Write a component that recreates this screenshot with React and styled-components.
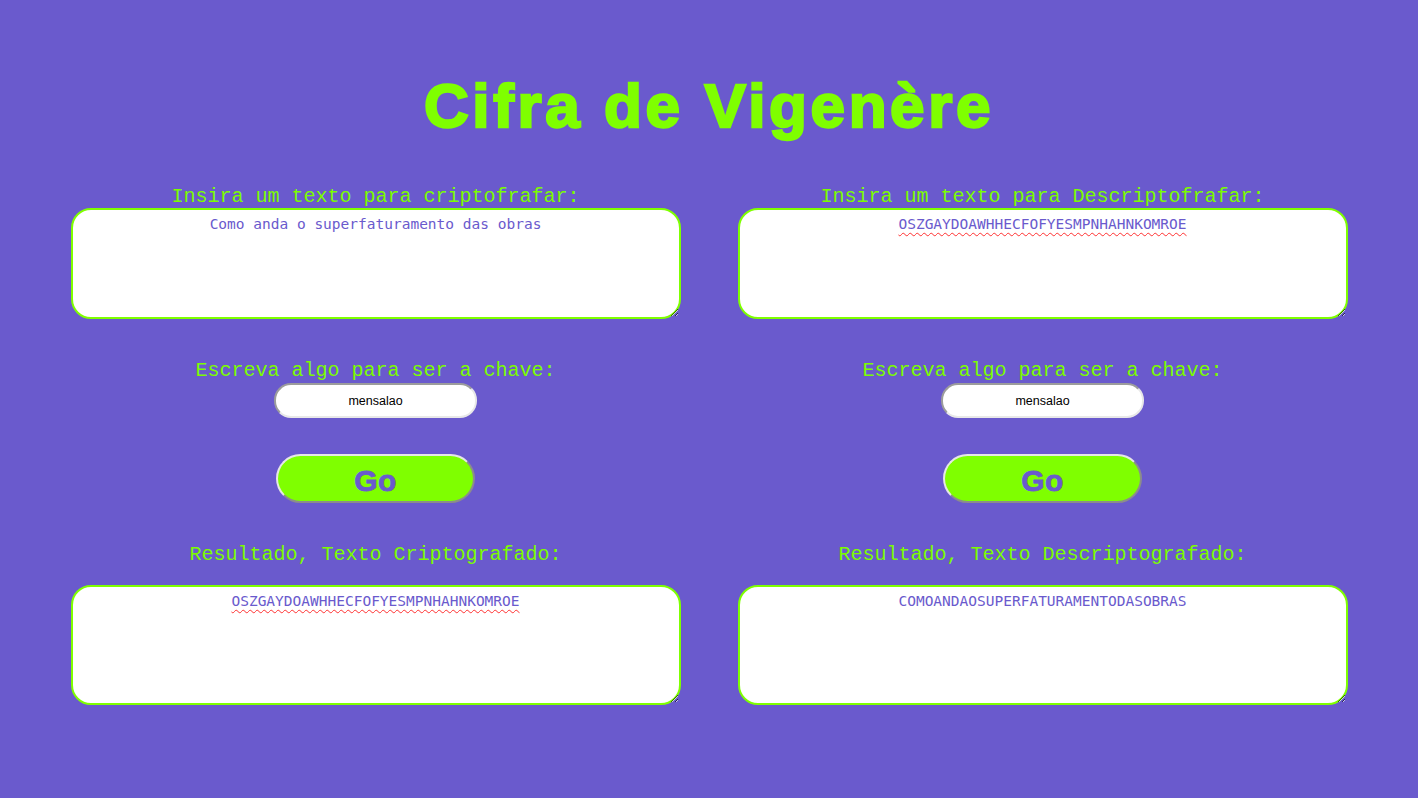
import React from "react";
import styled, { createGlobalStyle } from "styled-components";

const Global = createGlobalStyle`
  html, body {
    margin: 0;
    padding: 0;
    background: #6a5acd;
  }
  body {
    font-family: "Liberation Sans", Arial, sans-serif;
    min-height: 798px;
  }
`;

const Page = styled.main`
  display: flex;
  flex-direction: column;
  align-items: center;
  padding-top: 70px;
`;

const Title = styled.h1`
  margin: 0;
  font-family: "Liberation Sans", Arial, sans-serif;
  font-weight: 900;
  font-size: 62px;
  line-height: 72px;
  letter-spacing: 3.6px;
  color: #7fff00;
  -webkit-text-stroke: 2.4px #7fff00;
`;

const Columns = styled.div`
  display: grid;
  grid-template-columns: 610px 610px;
  column-gap: 57px;
  margin-top: 44px;
`;

const Column = styled.section`
  display: flex;
  flex-direction: column;
  align-items: center;
`;

const Label = styled.label`
  display: block;
  font-family: "Liberation Mono", "Courier New", monospace;
  font-size: 20px;
  line-height: 22px;
  color: #7cfc00;
  margin-top: ${(p) => p.$top || 0}px;
  margin-bottom: ${(p) => p.$bottom || 0}px;
  white-space: pre;
`;

const TextBox = styled.textarea`
  box-sizing: border-box;
  width: 610px;
  height: ${(p) => p.$height}px;
  margin: 0;
  padding: 6px 8px;
  border: 2px solid #7fff00;
  border-radius: 20px;
  background: #fff;
  color: #6a5acd;
  font-family: "DejaVu Sans Mono", monospace;
  font-size: 14.5px;
  text-align: center;
  outline: none;
  text-decoration: ${(p) => (p.$squiggle ? "underline wavy #ff3030" : "none")};
  text-decoration-thickness: 1px;
  text-underline-offset: 3px;
`;

const KeyInput = styled.input`
  box-sizing: border-box;
  width: 203px;
  height: 35px;
  margin: 1px 0 0;
  padding: 0 10px;
  border: 2px solid;
  border-color: #9c9c9c #e8e8e8 #e8e8e8 #9c9c9c;
  border-radius: 17px;
  background: #fff;
  color: #000;
  font-family: "Liberation Sans", Arial, sans-serif;
  font-size: 12.5px;
  text-align: center;
  outline: none;
`;

const GoButton = styled.button`
  box-sizing: border-box;
  width: 199px;
  height: 49px;
  margin-top: 36px;
  border: 2px solid;
  border-color: #e6e6e6 #8c8c8c #8c8c8c #e6e6e6;
  border-radius: 25px;
  background: #7fff00;
  color: #6a5acd;
  font-family: "Liberation Sans", Arial, sans-serif;
  font-weight: 700;
  font-size: 30px;
  letter-spacing: 0.5px;
  -webkit-text-stroke: 0.8px #6a5acd;
  line-height: 1;
  padding: 5px 0 0;
  cursor: pointer;
`;

const panels = [
  {
    id: "enc",
    inputLabel: "Insira um texto para criptofrafar:",
    inputText: "Como anda o superfaturamento das obras",
    inputSquiggle: false,
    resultLabel: "Resultado, Texto Criptografado:",
    resultText: "OSZGAYDOAWHHECFOFYESMPNHAHNKOMROE",
    resultSquiggle: true,
  },
  {
    id: "dec",
    inputLabel: "Insira um texto para Descriptofrafar:",
    inputText: "OSZGAYDOAWHHECFOFYESMPNHAHNKOMROE",
    inputSquiggle: true,
    resultLabel: "Resultado, Texto Descriptografado:",
    resultText: "COMOANDAOSUPERFATURAMENTODASOBRAS",
    resultSquiggle: false,
  },
];

function Panel({ p }) {
  return (
    <Column>
      <Label htmlFor={`${p.id}-in`}>{p.inputLabel}</Label>
      <TextBox
        id={`${p.id}-in`}
        $height={111}
        $squiggle={p.inputSquiggle}
        spellCheck={false}
        defaultValue={p.inputText}
      />
      <Label htmlFor={`${p.id}-key`} $top={41}>
        Escreva algo para ser a chave:
      </Label>
      <KeyInput id={`${p.id}-key`} defaultValue="mensalao" />
      <GoButton type="button">Go</GoButton>
      <Label htmlFor={`${p.id}-out`} $top={41} $bottom={19}>
        {p.resultLabel}
      </Label>
      <TextBox
        id={`${p.id}-out`}
        $height={120}
        $squiggle={p.resultSquiggle}
        spellCheck={false}
        defaultValue={p.resultText}
      />
    </Column>
  );
}

export default function App() {
  return (
    <>
      <Global />
      <Page>
        <Title>Cifra de Vigenère</Title>
        <Columns>
          {panels.map((p) => (
            <Panel key={p.id} p={p} />
          ))}
        </Columns>
      </Page>
    </>
  );
}
